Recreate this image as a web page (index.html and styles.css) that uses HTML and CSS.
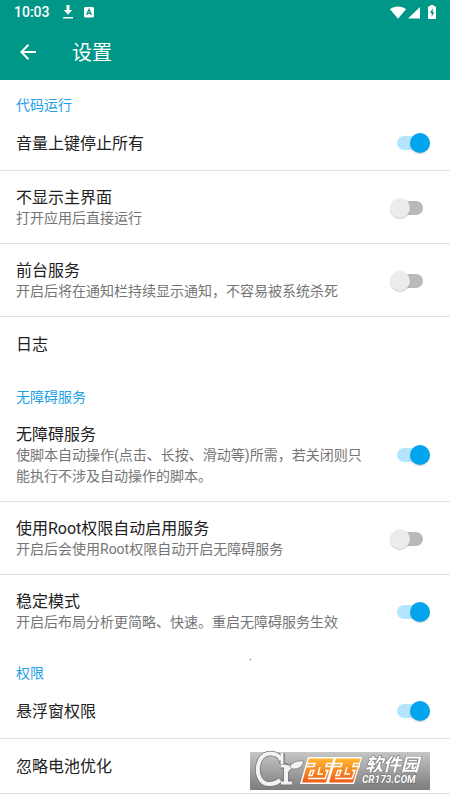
FILE: index.html
```html
<!DOCTYPE html>
<html lang="zh-CN">
<head>
<meta charset="utf-8">
<meta name="viewport" content="width=device-width, initial-scale=1">
<title>设置</title>
<link rel="stylesheet" href="styles.css">
</head>
<body>
<header class="app-header">
  <div class="status-bar">
    <span class="clock">10:03</span>
    <svg class="status-icon download" width="12" height="14" viewBox="0 0 12 14" fill="#fff"><path d="M4.500 0h3v5h2.700L6 9.800 1.800 5h2.700zM1.200 12h9.800v1.500H1.200z"/></svg>
    <svg class="status-icon" width="10" height="11" viewBox="0 0 10 11"><rect width="10" height="10.500" rx="1.500" fill="#fff"/><path d="M2.600 8 5 2.400 7.400 8M3.500 6.300h3" fill="none" stroke="#009688" stroke-width="1.300"/></svg>
    <span class="status-right">
      <svg width="16" height="13" viewBox="0 0 16 13" fill="#fff"><path d="M0 3.200C4.500-.4 11.500-.4 16 3.200L8 12.700z"/></svg>
      <svg width="12" height="13" viewBox="0 0 12 13" fill="#fff"><path d="M12 1v11.500H0z"/></svg>
      <svg class="battery" width="8" height="14" viewBox="0 0 8 14"><path d="M2.300 0h3.400v1.200H7q1 0 1 1V13q0 1-1 1H1q-1 0-1-1V2.200q0-1 1-1h1.300z" fill="#fff"/><path d="M4.700 3.300 2 8h1.700v3.700L6.300 7H4.700z" fill="#009688"/></svg>
    </span>
  </div>
  <div class="toolbar">
    <button class="back" type="button" aria-label="返回">
      <svg width="16" height="16" viewBox="0 0 16 16" fill="none" stroke="#fff" stroke-width="2"><path d="M16 8H1.500M8.500.8 1.400 8l7.100 7.200"/></svg>
    </button>
    <h1 class="page-title">设置</h1>
  </div>
</header>

<main>
  <section class="group">
    <h2 class="group-title">代码运行</h2>
    <label class="row single">
      <span class="text"><span class="title">音量上键停止所有</span></span>
      <input class="switch" type="checkbox" checked>
    </label>
    <label class="row">
      <span class="text"><span class="title">不显示主界面</span><span class="desc">打开应用后直接运行</span></span>
      <input class="switch" type="checkbox">
    </label>
    <label class="row">
      <span class="text"><span class="title">前台服务</span><span class="desc">开启后将在通知栏持续显示通知，不容易被系统杀死</span></span>
      <input class="switch" type="checkbox">
    </label>
    <a class="row single last" href="#log"><span class="title">日志</span></a>
  </section>

  <section class="group">
    <h2 class="group-title">无障碍服务</h2>
    <label class="row">
      <span class="text"><span class="title">无障碍服务</span><span class="desc">使脚本自动操作(点击、长按、滑动等)所需，若关闭则只能执行不涉及自动操作的脚本。</span></span>
      <input class="switch" type="checkbox" checked>
    </label>
    <label class="row">
      <span class="text"><span class="title">使用Root权限自动启用服务</span><span class="desc">开启后会使用Root权限自动开启无障碍服务</span></span>
      <input class="switch" type="checkbox">
    </label>
    <label class="row last">
      <span class="text"><span class="title">稳定模式</span><span class="desc">开启后布局分析更简略、快速。重启无障碍服务生效</span></span>
      <input class="switch" type="checkbox" checked>
    </label>
  </section>

  <section class="group">
    <h2 class="group-title">权限</h2>
    <label class="row single">
      <span class="text"><span class="title">悬浮窗权限</span></span>
      <input class="switch" type="checkbox" checked>
    </label>
    <a class="row single" href="#battery"><span class="title">忽略电池优化</span></a>
  </section>
</main>

<svg class="watermark" width="180" height="38" viewBox="0 0 180 38">
  <defs>
    <linearGradient id="plate" x2="0" y2="1"><stop offset="0" stop-color="#c6c6c6"/><stop offset="1" stop-color="#7c7c7c"/></linearGradient>
    <linearGradient id="orange" gradientUnits="userSpaceOnUse" x1="0" y1="7" x2="0" y2="31"><stop offset="0" stop-color="#ffb52e"/><stop offset="1" stop-color="#ee5a16"/></linearGradient>
  </defs>
  <rect width="180" height="38" fill="url(#plate)"/>
  <g fill="none" stroke-linejoin="round">
    <g stroke="#777" stroke-width="5.500">
      <path d="M32 1v11M31 8C28 0 15-1 10 8 5 19 9 32 19 32c5 0 9-2 11-4"/>
      <path d="M31 14h5v16M31 31h11M36 20c2-5 5-6 9-6"/>
    </g>
    <g stroke="#f3f3f3" stroke-width="4">
      <path d="M31 8C28 0 15-1 10 8 5 19 9 32 19 32c5 0 9-2 11-4"/>
      <path d="M36 13v18M36 20c2-5 5-6 9-6"/>
    </g>
    <path d="M32 1v11M31 14h5M31 31h11" stroke="#f3f3f3" stroke-width="3"/>
  </g>
  <path d="M40 14q4-6 14-5-3 9-11 8-3-1-3-3z" fill="#f3f3f3" stroke="#777" stroke-width=".7"/>
  <path d="M58 5h54l-8 27H50z" fill="#fff"/>
  <path d="M59 6.500h24.500l-7.500 24H52zM86 6.500h24.500l-7.500 24H79z" fill="url(#orange)"/>
  <g fill="none" stroke="#fff" stroke-width="1.500">
    <path d="M57 11.500h8l-1 3h-8M83 11.500h-6l-1 3h7M84 11.500h8l-1 3h-8M110 11.500h-6l-1 3h7"/>
    <path d="M61 18.500h3l-2 5h-3zM75 18.500h3l-3 8H58M70 15l-2 7h5M88 18.500h3l-2 5h-3zM102 18.500h3l-3 8H85M97 15l-2 7h5"/>
  </g>
  <text class="mark-name" x="115" y="19">软件园</text>
  <text class="mark-url" x="112" y="31">CR173.COM</text>
  <circle cx=".5" cy="-92.500" r=".7" fill="#777"/>
</svg>
</body>
</html>
```
FILE: styles.css
```css
* {
  box-sizing: border-box;
}

body {
  margin: 0;
  background: #fff;
  color: #212121;
  font-family: Roboto, "Noto Sans CJK SC", sans-serif;
}

.app-header {
  background: #009688;
  color: #fff;
}

.status-bar {
  display: flex;
  align-items: center;
  height: 24px;
  padding: 0 14px;
}

.clock {
  margin-right: 12px;
  font-size: 14px;
  font-weight: 500;
  line-height: 24px;
}

.status-icon {
  margin-right: 10px;
}

.status-right {
  display: flex;
  align-items: center;
  gap: 2px;
  margin-left: auto;
}

.battery {
  margin-left: 6px;
}

.toolbar {
  display: flex;
  align-items: center;
  height: 56px;
  padding: 0 8px;
}

.back {
  display: flex;
  align-items: center;
  justify-content: center;
  width: 40px;
  height: 40px;
  padding: 0;
  border: 0;
  background: none;
}

.page-title {
  margin: 2px 0 0 24px;
  font-size: 20px;
  font-weight: 400;
  line-height: 28px;
}

.group-title {
  margin: 0;
  padding: 15px 16px 1px;
  color: #1da1e8;
  font-size: 14px;
  font-weight: 400;
  line-height: 20px;
}

.row {
  display: flex;
  align-items: center;
  gap: 16px;
  padding: 17px 20px 14px 16px;
  border-bottom: 1px solid #e0e0e0;
  color: inherit;
  text-decoration: none;
}

.single {
  padding-top: 18px;
  padding-bottom: 16px;
}

.last {
  border-bottom-color: transparent;
}

.text {
  flex: 1;
}

.title,
.desc {
  display: block;
}

.title {
  font-size: 16px;
  line-height: 20px;
}

.desc {
  color: #757575;
  font-size: 14px;
  line-height: 21px;
}

.switch {
  position: relative;
  display: flex;
  flex: none;
  align-items: center;
  justify-content: center;
  width: 40px;
  height: 20px;
  margin: -1px 0 1px;
  appearance: none;
}

.switch::before {
  content: "";
  width: 26px;
  height: 14px;
  border-radius: 7px;
  background: #b9b9b9;
}

.switch::after {
  content: "";
  position: absolute;
  top: 0;
  left: 0;
  width: 20px;
  height: 20px;
  border-radius: 50%;
  background: #ececec;
  box-shadow: 0 1px 1px rgba(0, 0, 0, 0.2);
}

.switch:checked::before {
  background: #b3e5fc;
}

.switch:checked::after {
  right: 0;
  left: auto;
  background: #03a4ee;
}

.watermark {
  position: fixed;
  right: 20px;
  bottom: 10px;
  overflow: visible;
}

.mark-name,
.mark-url {
  fill: #fff;
  stroke: #666;
  stroke-width: 1px;
  paint-order: stroke;
  font-style: italic;
  font-weight: 700;
}

.mark-name {
  font-size: 18px;
}

.mark-url {
  font-size: 10px;
}
```
